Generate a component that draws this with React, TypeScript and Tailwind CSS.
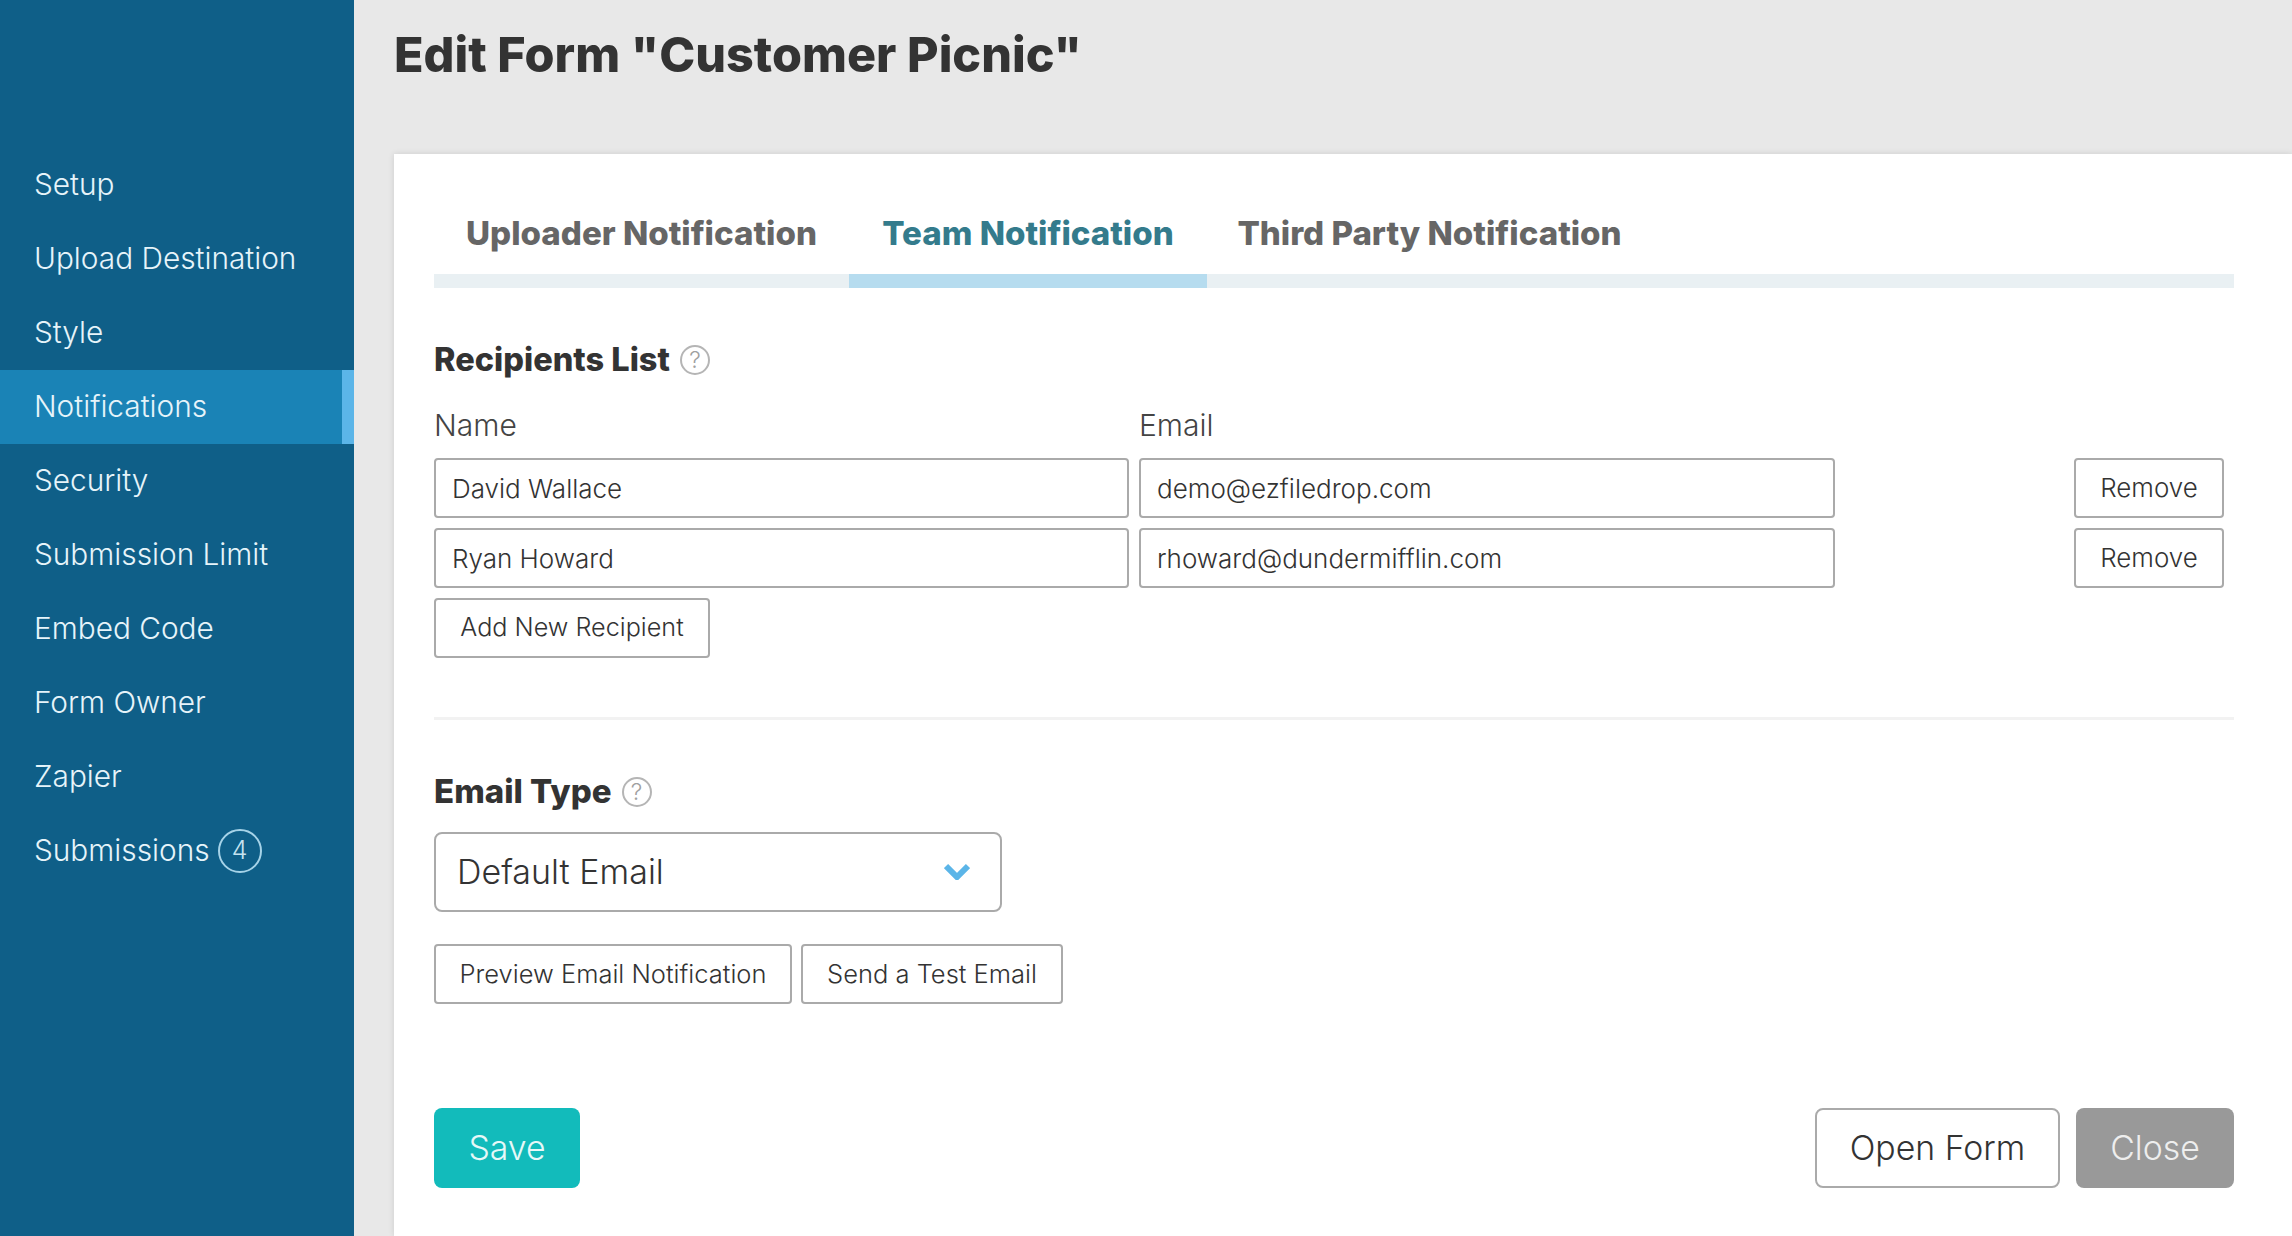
const menu = ["Setup", "Upload Destination", "Style", "Notifications", "Security", "Submission Limit", "Embed Code", "Form Owner", "Zapier"];

function Help() {
  return (
    <span className="flex h-[30px] w-[30px] items-center justify-center rounded-full border-[2.5px] border-[#b5b5b5] text-[23px] font-light text-[#a0a0a0]">?</span>
  );
}

function Field({ value, className = "w-[695px]" }: { value: string; className?: string }) {
  return (
    <div className={"flex h-[60px] items-center rounded-[4px] border-2 border-[#aaaaaa] px-[16px] pt-[1px] text-[26px] font-[350] text-[#333333] " + className}>{value}</div>
  );
}

function SmallButton({ label, className = "" }: { label: string; className?: string }) {
  return (
    <button className={"flex h-[60px] items-center justify-center rounded-[4px] border-2 border-[#aaaaaa] bg-white font-[350] text-[#333333] " + className}>{label}</button>
  );
}

export default function App() {
  return (
    <div className="flex h-[1236px] w-[2292px] overflow-hidden bg-[#e8e8e8] font-['Inter',sans-serif]">
      {/* sidebar */}
      <aside className="flex w-[354px] shrink-0 flex-col bg-[#0f5f88] pt-[148px] text-[29.8px] font-[350] text-[#e6f4fa]">
        {menu.map((item) => (
          <a
            key={item}
            className={
              item === "Notifications"
                ? "flex h-[74px] items-center border-r-[12px] border-[#5bb5e8] bg-[#1a83b6] pb-[2px] pl-[34px]"
                : "flex h-[74px] items-center pb-[2px] pl-[34px]"
            }
          >
            {item}
          </a>
        ))}
        <a className="flex h-[74px] items-center pl-[34px]">
          <span className="pb-[2px]">Submissions</span>
          <span className="ml-[8px] flex h-[44px] w-[44px] items-center justify-center rounded-full border-2 border-[#a6d3e8] text-[25px] font-light text-[#c5e3f0]">4</span>
        </a>
      </aside>

      {/* main */}
      <main className="flex flex-1 flex-col">
        <header className="h-[154px] shrink-0 pl-[40px] pt-[25px]">
          <h1 className="text-[48.5px] font-extrabold leading-[60px] text-[#333333]">Edit Form "Customer Picnic"</h1>
        </header>

        <section className="ml-[40px] flex-1 bg-white pl-[40px] pr-[58px] pt-[36px] shadow-[0_0_6px_rgba(0,0,0,0.12)]">
          <div className="flex text-[33.1px] font-extrabold">
            <div className="flex h-[98px] w-[415px] items-center justify-center border-b-[14px] border-[#e9f0f3] pt-[3px] text-[#666666]">Uploader Notification</div>
            <div className="flex h-[98px] w-[358px] items-center justify-center border-b-[14px] border-[#b6dcef] pt-[3px] text-[#347b8c]">Team Notification</div>
            <div className="flex h-[98px] w-[445px] items-center justify-center border-b-[14px] border-[#e9f0f3] pt-[3px] text-[#666666]">Third Party Notification</div>
            <div className="h-[98px] flex-1 border-b-[14px] border-[#e9f0f3]"></div>
          </div>

          <div className="mt-[52px] flex h-[40px] items-center gap-[10px]">
            <h2 className="text-[32.5px] font-extrabold text-[#333333]">Recipients List</h2>
            <Help />
          </div>

          <div className="mt-[25px] flex h-[40px] items-center gap-[10px] text-[30px] font-[350] text-[#444444]">
            <span className="w-[695px]">Name</span>
            <span>Email</span>
          </div>

          <div className="mt-[13px] flex flex-col gap-[10px]">
            <div className="flex gap-[10px]">
              <Field value="David Wallace" />
              <Field value="demo@ezfiledrop.com" className="w-[696px]" />
              <SmallButton label="Remove" className="ml-auto mr-[10px] w-[150px] text-[25.9px]" />
            </div>
            <div className="flex gap-[10px]">
              <Field value="Ryan Howard" />
              <Field value="rhoward@dundermifflin.com" className="w-[696px]" />
              <SmallButton label="Remove" className="ml-auto mr-[10px] w-[150px] text-[25.9px]" />
            </div>
            <SmallButton label="Add New Recipient" className="w-[276px] text-[25.2px]" />
          </div>

          <div className="mt-[59px] h-[3px] bg-[#f2f2f2]"></div>

          <div className="mt-[52px] flex h-[40px] items-center gap-[10px]">
            <h2 className="text-[33px] font-extrabold text-[#333333]">Email Type</h2>
            <Help />
          </div>

          <div className="mt-[20px] flex h-[80px] w-[568px] items-center justify-between rounded-[8px] border-2 border-[#aaaaaa] pb-[1px] pl-[21px] pr-[30px] text-[34px] font-[350] text-[#333333]">
            <span>Default Email</span>
            <svg width="26" height="17" viewBox="0 0 26 17" fill="none" stroke="#5bb5e8" strokeWidth="6">
              <path d="M2 3l11 11L24 3" />
            </svg>
          </div>

          <div className="mt-[32px] flex gap-[9px]">
            <SmallButton label="Preview Email Notification" className="w-[358px] text-[25.5px]" />
            <SmallButton label="Send a Test Email" className="w-[262px] text-[25.5px]" />
          </div>

          <div className="mt-[104px] flex items-center text-[33.8px] font-[350]">
            <button className="h-[80px] w-[146px] rounded-[8px] bg-[#12bbbb] text-[#e6f8f8]">Save</button>
            <button className="ml-auto h-[80px] w-[245px] rounded-[8px] border-2 border-[#aaaaaa] bg-white text-[#333333]">Open Form</button>
            <button className="ml-[16px] h-[80px] w-[158px] rounded-[8px] bg-[#999999] text-[#eeeeee]">Close</button>
          </div>
        </section>
      </main>
    </div>
  );
}
